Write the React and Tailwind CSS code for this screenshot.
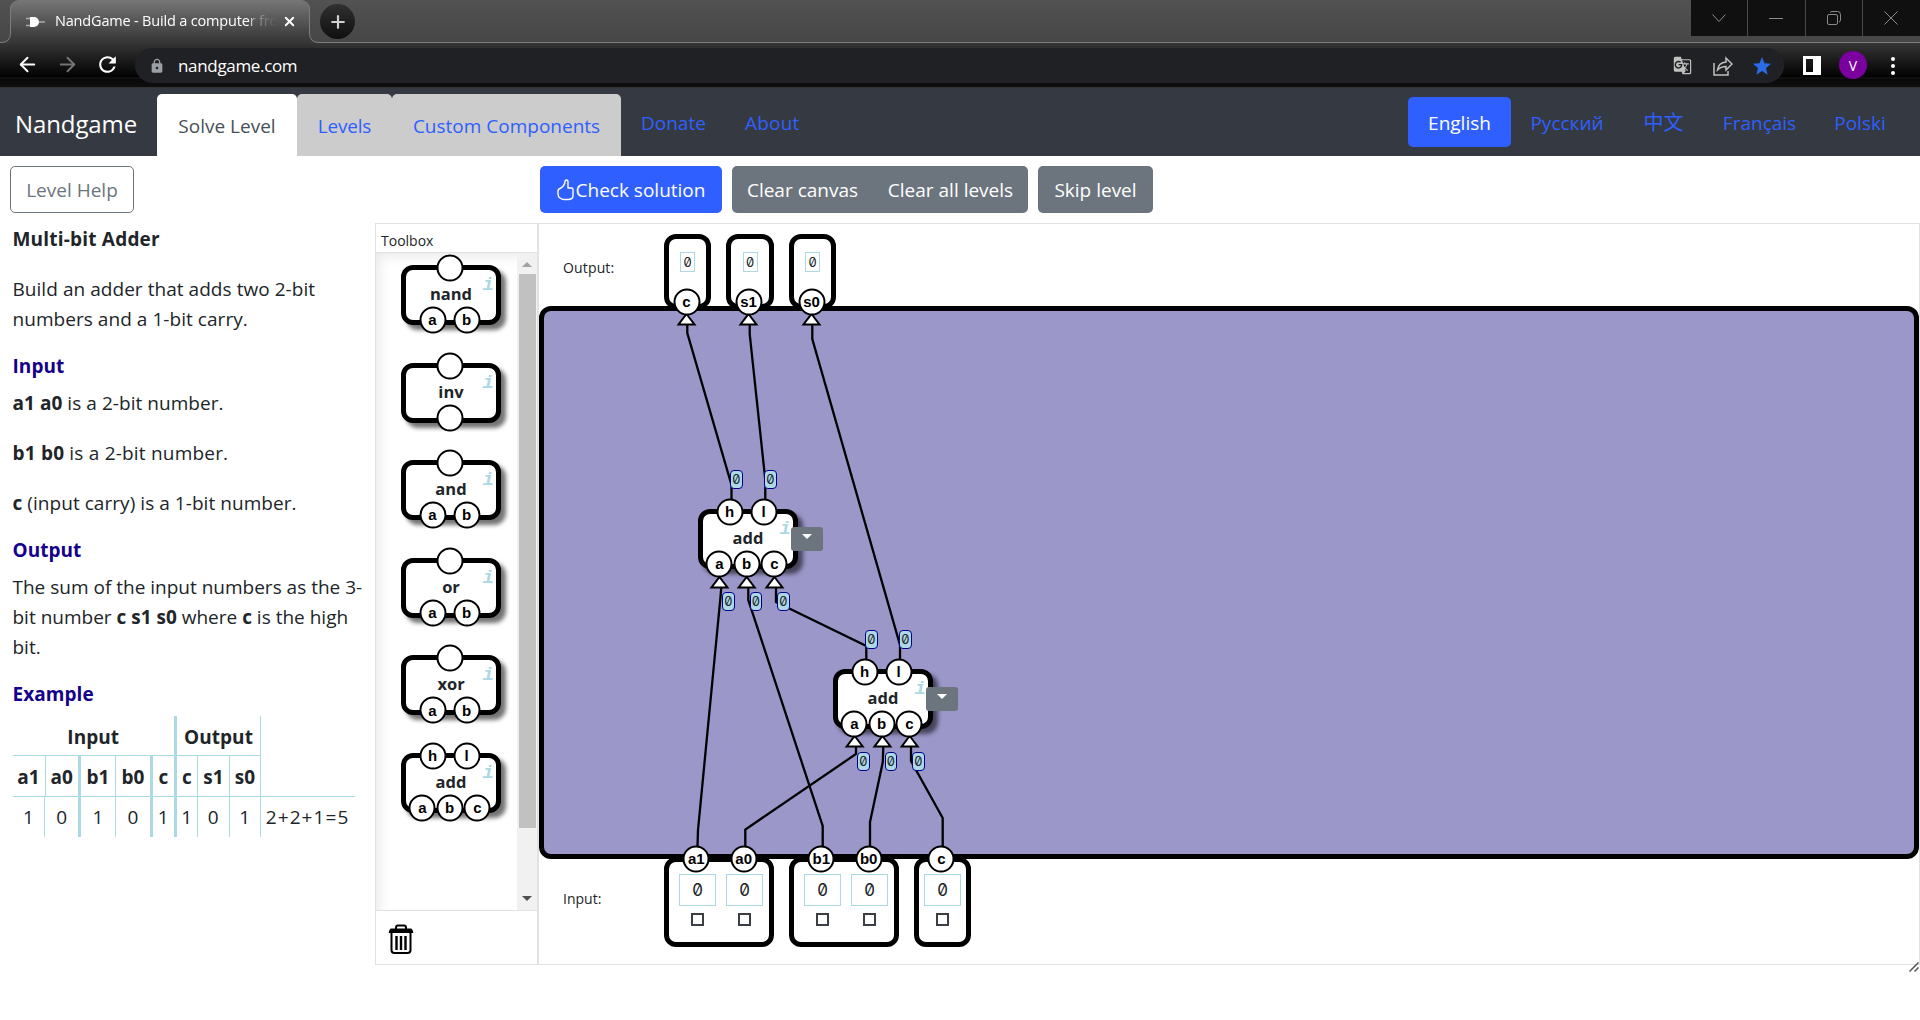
import React from "react";
import { ArrowLeft, ArrowRight, Plus, X } from "lucide-react";
import { MdLock, MdRefresh, MdGTranslate } from "react-icons/md";

const sans = "font-['Open_Sans','Noto_Sans_CJK_SC',sans-serif]";

function Tab() {
  return (
    <div className="relative ml-[10px] flex h-[43px] w-[300px] items-center rounded-t-[9px] border-x border-[#7d7d7d] bg-linear-to-b from-[#777777] to-[#353535] pl-[15px]">
      <svg className="absolute -left-[10px] bottom-0" width="10" height="10">
        <path d="M0 10V9.5Q9.5 9.5 9.5 0H10V10Z" fill="#3c3c3c" />
        <path d="M0 9.5Q9.5 9.5 9.5 0" fill="none" stroke="#7d7d7d" />
      </svg>
      <svg className="absolute -right-[10px] bottom-0" width="10" height="10">
        <path d="M10 10V9.5Q.5 9.5 .5 0H0V10Z" fill="#3c3c3c" />
        <path d="M10 9.5Q.5 9.5 .5 0" fill="none" stroke="#7d7d7d" />
      </svg>
      <svg width="19" height="12" viewBox="0 0 19 12" className="shrink-0">
        <path d="M4 1h4a5 5 0 0 1 0 10H4z" fill="#fff" />
        <path d="M0 2.500h4M0 9.500h4M13 6h6" stroke="#aaa" strokeWidth="1.6" />
      </svg>
      <div className="ml-[10px] w-[222px] overflow-hidden whitespace-nowrap pb-[2px] text-[14.5px] tracking-[-0.18px] text-white [mask-image:linear-gradient(to_right,#000_87%,rgba(0,0,0,0.4)_90%,transparent_100%)]">
        NandGame - Build a computer from
      </div>
      <X size={15} strokeWidth={3} className="ml-[5px] shrink-0 text-white" />
    </div>
  );
}

function Browser() {
  return (
    <header>
      <div className="flex h-[43px] border-b border-[#7d7d7d] bg-linear-to-b from-[#525252] to-[#464646]">
        <Tab />
        <div className="ml-[10px] mt-[4px] flex h-[35px] w-[35px] items-center justify-center rounded-full bg-linear-to-b from-[#303030] to-[#101010] text-[#d0d0d0]">
          <Plus size={20} strokeWidth={2.6} />
        </div>
        <div className="ml-auto grid h-[36px] w-[229px] grid-cols-4 divide-x divide-[#4a4a4a] bg-[#101010] text-[#8a8a8a]">
          <div className="flex items-center justify-center"><svg width="14" height="10" fill="none" stroke="currentColor"><path d="M.5 1.5l6.5 7 6.500-7" /></svg></div>
          <div className="flex items-center justify-center"><svg width="14" height="2" fill="none" stroke="currentColor"><path d="M0 1.500h14" /></svg></div>
          <div className="flex items-center justify-center"><svg width="14" height="14" fill="none" stroke="currentColor"><rect x=".5" y="3.5" width="10" height="10" rx="1.500" /><path d="M3 1.500Q4 .5 5 .5h5.500a3 3 0 0 1 3 3v5.500q0 1.500-1.500 2" /></svg></div>
          <div className="flex items-center justify-center"><svg width="14" height="14" fill="none" stroke="currentColor"><path d="M.5.5l13 13M13.500.5l-13 13" /></svg></div>
        </div>
      </div>
      <div className="flex h-[45px] items-start border-b border-[#333] bg-[linear-gradient(to_bottom,#353535_0,#050505_32px,#000_34px,#1a1a1a_35px,#080808_36px,#101010_45px)]">
        <ArrowLeft size={23} className="ml-[16px] mt-[10px] text-white" />
        <ArrowRight size={23} className="ml-[17px] mt-[10px] text-[#757575]" />
        <MdRefresh size={25} className="ml-[16px] mt-[9px] text-white" />
        <div className="ml-[15px] mt-[5px] flex h-[35px] w-[1649px] items-center rounded-full bg-[#202124] pl-[14px] text-white">
          <MdLock size={16} className="text-[#9aa0a6]" />
          <span className="ml-[13px] text-[17px] tracking-[-0.33px]">nandgame.com</span>
          <MdGTranslate size={19} className="ml-auto text-[#c0c0c0]" />
          <svg className="ml-[21px]" width="20" height="20" fill="none" stroke="#c0c0c0" strokeWidth="1.500"><path d="M1 7v12h14v-4" /><path d="M4.500 14q1-7.500 8.500-8V2l6 6-6 6v-3.500q-5 0-8.500 3.500z" /></svg>
          <svg className="ml-[20px] mr-[13px]" width="18" height="18" viewBox="0 0 18 18"><path d="M9 0l2.500 6.200 6.500.5-5 4.300 1.600 6.700L9 14.100l-5.600 3.600L5 11 0 6.700l6.500-.5z" fill="#2b6be8" /></svg>
        </div>
        <div className="ml-[19px] mt-[13px] h-[19px] w-[18px] border-[3px] border-r-[8px] border-white" />
        <div className="ml-[18px] mt-[8px] flex h-[28px] w-[28px] items-center justify-center rounded-full bg-[#7b00a0] text-[14px] text-white">V</div>
        <div className="ml-[24px] mt-[14px] flex flex-col gap-[3px]">
          <i className="h-[4px] w-[4px] rounded-full bg-white" /><i className="h-[4px] w-[4px] rounded-full bg-white" /><i className="h-[4px] w-[4px] rounded-full bg-white" />
        </div>
      </div>
    </header>
  );
}

function Nav() {
  return (
    <nav className="flex h-[68px] bg-[#353941] text-[19px] text-[#2f60ff]">
      <div className="w-[157px] pl-[15px] pt-[17px] text-[24px] leading-[38px] text-white"><span className="tracking-[-0.1px]">Nandgame</span></div>
      <div className="mt-[6px] h-[62px] w-[140px] rounded-t-[5px] bg-white text-center leading-[64px] text-[#495057]">Solve Level</div>
      <div className="mt-[6px] h-[62px] w-[95px] rounded-t-[5px] bg-[#cccccc] text-center leading-[64px] tracking-[-0.2px]">Levels</div>
      <div className="mt-[6px] h-[62px] w-[229px] rounded-t-[5px] bg-[#cccccc] text-center leading-[64px]">Custom Components</div>
      <div className="ml-[20px] w-[104px] leading-[70px]">Donate</div>
      <div className="leading-[70px] tracking-[0.2px]">About</div>
      <div className="ml-auto mt-[9px] flex h-[50px] pr-[15px] leading-[52px]">
        <div className="w-[103px] rounded-[5px] bg-[#2f60ff] text-center text-white">English</div>
        <div className="w-[112px] text-center">Русский</div>
        <div className="w-[81px] text-center text-[20px]">中文</div>
        <div className="w-[111px] text-center">Français</div>
        <div className="w-[90px] text-center">Polski</div>
      </div>
    </nav>
  );
}

function Thumb() {
  return (
    <svg width="17" height="22" viewBox="0 0 17 22" fill="none" stroke="#fff" strokeWidth="1.400" strokeLinejoin="round">
      <path d="M4 9q4-3 4-6.500Q8 1 9.500 1t1.500 2v6h3.500q1.500 0 1.500 1.500v6q0 4-5 4H7q-2 0-4-1.500Q1 17.500 1 15v-3q0-2 3-3z" />
    </svg>
  );
}

function Toolbar() {
  return (
    <div className="flex h-[67px] pl-[10px] pt-[10px] text-[19px] leading-[48px]">
      <div className="h-[47px] w-[124px] rounded-[5px] border border-[#6c757d] text-center leading-[46px] text-[#6c757d]">Level Help</div>
      <div className="ml-[406px] flex h-[47px] w-[182px] items-center justify-center rounded-[5px] bg-[#2f60ff] text-white"><Thumb /><span className="ml-[2px]">Check solution</span></div>
      <div className="ml-[10px] flex h-[47px] w-[296px] rounded-[5px] bg-[#6c757d] text-white">
        <div className="w-[141px] text-center">Clear canvas</div>
        <div className="w-[155px] text-center">Clear all levels</div>
      </div>
      <div className="ml-[10px] h-[47px] w-[115px] rounded-[5px] bg-[#6c757d] text-center text-white">Skip level</div>
    </div>
  );
}

const B = ({ children }) => <b className="font-bold">{children}</b>;
const H = ({ children }) => <h3 className="mb-[10px] mt-[20px] font-bold leading-[24px] text-[#14008c]">{children}</h3>;

function Help() {
  return (
    <section className="w-[375px] shrink-0 pl-[12.500px] pt-px text-[19px] leading-[30px] tracking-[0.05px] text-[#212529]">
      <p className="font-bold tracking-[0.2px]">Multi-bit Adder</p>
      <p className="mt-[20px]">Build an adder that adds two 2-bit<br />numbers and a 1-bit carry.</p>
      <H>Input</H>
      <p><B>a1 a0</B> is a 2-bit number.</p>
      <p className="mt-[20px] tracking-[0.2px]"><B>b1 b0</B> is a 2-bit number.</p>
      <p className="mt-[20px]"><B>c</B> (input carry) is a 1-bit number.</p>
      <H>Output</H>
      <p className="whitespace-nowrap tracking-[0px]">The sum of the input numbers as the 3-<br />bit number <B>c s1 s0</B> where <B>c</B> is the high<br />bit.</p>
      <H>Example</H>
      <div className="w-[342px] text-center">
        <div className="flex h-[40px] font-bold leading-[43px]">
          <div className="w-[164.500px] border-b border-r-[3px] border-[#add8e6]">Input</div>
          <div className="w-[84px] border-b border-r border-[#add8e6]">Output</div>
        </div>
        <div className="flex h-[41px] border-b border-[#add8e6] font-bold leading-[42px]">
          <div className="w-[33px] border-r border-[#add8e6]">a1</div>
          <div className="w-[35.500px] border-r-[3px] border-[#add8e6]">a0</div>
          <div className="w-[35px] border-r border-[#add8e6]">b1</div>
          <div className="w-[37px] border-r-[3px] border-[#add8e6]">b0</div>
          <div className="w-[24px] border-r-[3px] border-[#add8e6]">c</div>
          <div className="w-[21px] border-r border-[#add8e6]">c</div>
          <div className="w-[32px] border-r border-[#add8e6]">s1</div>
          <div className="w-[31px] border-r border-[#add8e6]">s0</div>
        </div>
        <div className="flex h-[40px] leading-[41px]">
          <div className="w-[33px] border-r border-[#add8e6]">1</div>
          <div className="w-[35.500px] border-r-[3px] border-[#add8e6]">0</div>
          <div className="w-[35px] border-r border-[#add8e6]">1</div>
          <div className="w-[37px] border-r-[3px] border-[#add8e6]">0</div>
          <div className="w-[24px] border-r-[3px] border-[#add8e6]">1</div>
          <div className="w-[21px] border-r border-[#add8e6]">1</div>
          <div className="w-[32px] border-r border-[#add8e6]">0</div>
          <div className="w-[31px] border-r border-[#add8e6]">1</div>
          <div className="w-[94px] tracking-[1.100px]">2+2+1=5</div>
        </div>
      </div>
    </section>
  );
}

/* Round connector; x and y give its centre inside the nearest positioned box. */
function Pin({ x, y, children }) {
  return (
    <div
      className="absolute flex h-[27px] w-[27px] -translate-x-1/2 -translate-y-1/2 items-center justify-center rounded-full border-2 border-black bg-white pb-[1.500px] font-['Liberation_Sans',Arial,sans-serif] text-[15px] font-bold leading-none text-black"
      style={{ left: x, top: y }}
    >
      {children}
    </div>
  );
}

function Gate({ name, top, bottom }) {
  const spots = { 1: [48.5], 2: [31.5, 65.5], 3: [21.3, 48.700, 76.300] };
  return (
    <div className="relative h-[60px] w-[100px] rounded-[12px] border-[5px] border-black bg-white text-center shadow-[5px_5px_4px_rgba(0,0,0,0.55)]">
      <div className="mt-[12px] text-[16.5px] font-bold leading-[24px] text-[#212529]">{name}</div>
      <span className="absolute right-[2px] top-[3px] font-['Liberation_Mono',monospace] text-[19px] font-bold italic leading-[24px] text-[#add8e6]">i</span>
      {top.map((t, i) => <Pin key={i} x={spots[top.length][i] - 5} y={-2}>{t}</Pin>)}
      {bottom.map((t, i) => <Pin key={i} x={spots[bottom.length][i] - 5} y={50}>{t}</Pin>)}
    </div>
  );
}

function Toolbox() {
  return (
    <aside className="flex h-[742px] w-[163px] shrink-0 flex-col border border-[#e2e2e2]">
      <div className="h-[29px] border-b border-[#e2e2e2] pl-[5px] pt-[2px] text-[14px] leading-[30px] text-[#212529]">Toolbox</div>
      <div className="flex h-[657px]">
        <div className="flex w-[141px] flex-col gap-[37.600px] pl-[25px] pt-[12px] shadow-[inset_10px_10px_14px_-8px_rgba(0,0,0,0.10)]">
          <Gate name="nand" top={[""]} bottom={["a", "b"]} />
          <Gate name="inv" top={[""]} bottom={[""]} />
          <Gate name="and" top={[""]} bottom={["a", "b"]} />
          <Gate name="or" top={[""]} bottom={["a", "b"]} />
          <Gate name="xor" top={[""]} bottom={["a", "b"]} />
          <Gate name="add" top={["h", "l"]} bottom={["a", "b", "c"]} />
        </div>
        <div className="flex w-[20px] flex-col items-center bg-[#f1f1f1]">
          <svg width="10" height="5" className="mt-[9px]"><path d="M0 5L5 0l5 5z" fill="#a3a3a3" /></svg>
          <div className="mt-[7px] h-[554px] w-[17px] bg-[#c1c1c1]" />
          <svg width="10" height="5" className="mt-[68px]"><path d="M0 0l5 5 5-5z" fill="#505050" /></svg>
        </div>
      </div>
      <div className="flex-1 border-t border-[#e2e2e2] pl-[12px] pt-[13px]">
        <svg width="26" height="30" viewBox="0 0 26 30" fill="none" stroke="#000">
          <path d="M8 5V3.500Q8 1.500 10 1.500h6q2 0 2 2V5" strokeWidth="2" />
          <path d="M1 8.500L2.500 5h21L25 8.500z" fill="#000" strokeWidth="1" />
          <path d="M3.500 8v18q0 3 3 3h13q3 0 3-3V8" strokeWidth="2" />
          <path d="M8.500 12v14M13 12v14M17.500 12v14" strokeWidth="2.400" />
        </svg>
      </div>
    </aside>
  );
}

const wires = [
  "687.3,325 687.3,333 731.500,485 731.500,500",
  "749.7,325 749.7,334 765.3,480 765.3,500",
  "812.3,325 812.3,339 900,645 900,660",
  "721.3,587 720.500,597 698,830 697.500,846",
  "748.3,587 748.3,600 822.7,826 822.7,846",
  "776,587 776,602 866.3,646 866.3,660",
  "856,746 856,754 745.3,829.500 745.3,846",
  "883.3,746 882.8,762 870,822 870,846",
  "911,746 911,761 942.7,818 942.7,846",
];
const tips = [[686.500, 314], [748.5, 314], [811.5, 314], [719.500, 577], [746.700, 577], [774.500, 577], [854.700, 736], [882.500, 736], [909.700, 736]];
const badges = [[730, 470], [764, 470], [722, 592], [749.500, 592], [777, 592], [865, 629.5], [899, 629.5], [857, 751.5], [884.500, 751.5], [912, 751.5]];
const ox = 538;
const oy = 223;

function At({ x, y, children }) {
  return <div className="absolute" style={{ left: x - ox - 1, top: y - oy - 1 }}>{children}</div>;
}

function Menu() {
  return (
    <div className="flex h-[24px] w-[32px] justify-center rounded-[3px] bg-[#6c757d] pt-[7px]">
      <svg width="10" height="5"><path d="M0 0h10L5 5z" fill="#fff" /></svg>
    </div>
  );
}

function Canvas() {
  return (
    <main className="relative h-[742px] w-[1382px] shrink-0 border border-[#e2e2e2]">
      <At x={563} y={255}><div className="text-[14px] leading-[26px] tracking-[0.15px] text-[#212529]">Output:</div></At>
      <At x={563} y={886}><div className="text-[14px] leading-[26px] text-[#212529]">Input:</div></At>
      <At x={539} y={306}><div className="h-[553px] w-[1380px] rounded-[12px] border-[5px] border-black bg-[#9b97c9]" /></At>

      {[[664, 47], [726, 48], [789, 47]].map(([x, w]) => (
        <At key={x} x={x} y={234}>
          <div className="flex h-[75px] justify-center rounded-[12px] border-[5px] border-black bg-white pt-[13px]" style={{ width: w }}>
            <div className="h-[20px] w-[15px] border border-[#add8e6] text-center font-['Inter',sans-serif] text-[13px] leading-[18px] text-[#212529] slashed-zero">0</div>
          </div>
        </At>
      ))}
      {[[664, 110, 2], [789, 110, 2], [914, 57, 1]].map(([x, w, n]) => (
        <At key={x} x={x} y={857}>
          <div className="flex h-[90px] gap-[10px] rounded-[12px] border-[5px] border-black bg-white pl-[10px] pt-[12px]" style={{ width: w }}>
            {Array.from({ length: n }, (_, i) => (
              <div key={i} className={n === 1 ? "-ml-[5px] flex flex-col items-center" : "flex flex-col items-center"}>
                <div className="h-[32px] w-[37px] border border-[#add8e6] text-center font-['Inter',sans-serif] text-[17px] leading-[30px] text-[#212529] slashed-zero">0</div>
                <div className="mt-[7px] h-[13px] w-[13px] border-2 border-[#3a3f45]" />
              </div>
            ))}
          </div>
        </At>
      ))}

      <svg className="absolute left-0 top-0" width="1380" height="740" viewBox="539 224 1380 740" fill="none" stroke="#000" strokeWidth="2.300">
        {wires.map((p) => <polyline key={p} points={p} />)}
        {tips.map(([x, y]) => <path key={x + "t" + y} d={`M${x} ${y}l8 10.500h-16z`} fill="#fff" strokeWidth="2" />)}
      </svg>

      {[[698, 509], [833, 668.500]].map(([x, y]) => (
        <At key={x} x={x} y={y}><Gate name="add" top={["h", "l"]} bottom={["a", "b", "c"]} /></At>
      ))}
      <At x={791} y={527}><Menu /></At>
      <At x={926} y={686.500}><Menu /></At>
      {badges.map(([x, y]) => (
        <At key={x + "b" + y} x={x} y={y}>
          <div className="flex h-[19px] w-[12.500px] justify-center rounded-[4px] border border-[#00008b] bg-[#add8e6] font-['Inter',sans-serif] text-[13px] leading-[17px] text-[#212529] slashed-zero">0</div>
        </At>
      ))}

      {[[686.500, 301.500, "c"], [748.500, 301.500, "s1"], [811.500, 301.500, "s0"], [696.300, 858.500, "a1"], [743.700, 858.500, "a0"], [821.300, 858.500, "b1"], [868.700, 858.500, "b0"], [941.300, 858.500, "c"]].map(([x, y, t]) => (
        <Pin key={x} x={x - ox - 1} y={y - oy - 1}>{t}</Pin>
      ))}
      <svg className="absolute -bottom-[8px] right-0" width="10" height="10" stroke="#555" strokeWidth="1.500"><path d="M.5 9.500l9-9M5.500 9.500l4-4" /></svg>
    </main>
  );
}

export default function App() {
  return (
    <div className={`h-[1020px] w-[1920px] overflow-hidden bg-white ${sans}`}>
      <Browser />
      <Nav />
      <Toolbar />
      <div className="flex">
        <Help />
        <Toolbox />
        <Canvas />
      </div>
    </div>
  );
}
